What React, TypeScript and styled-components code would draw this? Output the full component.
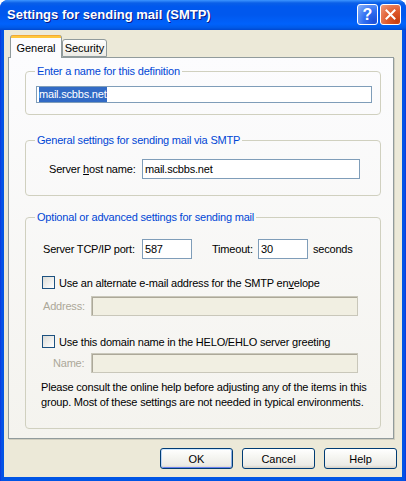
import React from "react";
import styled, { createGlobalStyle } from "styled-components";

const Global = createGlobalStyle`
  html, body { margin: 0; padding: 0; background: #ffffff; }
  body { font-family: "Liberation Sans", Arial, sans-serif; font-size: 11px; color: #000; }
  * { box-sizing: border-box; }
`;

const Window = styled.div`
  width: 406px;
  height: 481px;
  display: flex;
  flex-direction: column;
  background: linear-gradient(to right, #0831d9 0, #0a4ce6 1px, #0055e5 3px, #0055e5 403px, #0a4ce6 405px, #0831d9 406px);
  border-radius: 8px 8px 0 0;
  overflow: hidden;
`;

const TitleBar = styled.div`
  height: 30px;
  flex: none;
  display: flex;
  align-items: center;
  justify-content: space-between;
  padding: 0 5px 1px 7px;
  background: linear-gradient(to bottom, #3d95ff 0%, #0a5fe8 10%, #0058ee 22%, #0058ee 50%, #0062fc 80%, #005ae8 92%, #0048d0 100%);
`;

const Title = styled.div`
  color: #fff;
  font: bold 13px "Liberation Sans", Arial, sans-serif;
  text-shadow: 1px 1px 0 #0a1883;
`;

const TitleButtons = styled.div`
  display: flex;
  gap: 2px;
`;

const TitleBtn = styled.div<{ $kind: "help" | "close" }>`
  width: 21px;
  height: 21px;
  border: 1px solid #fff;
  border-radius: 3px;
  display: flex;
  align-items: center;
  justify-content: center;
  color: #fff;
  font: bold 16px "Liberation Sans", Arial, sans-serif;
  background: ${(p) =>
    p.$kind === "close"
      ? "radial-gradient(circle at 85% 85%, #c73e10 0%, #e05a2c 45%, #ef9c80 100%)"
      : "radial-gradient(circle at 85% 85%, #1c4fd8 0%, #2f6ef2 45%, #8ab4fa 100%)"};
`;

const Client = styled.div`
  flex: 1;
  margin: 0 4px 4px 4px;
  background: #ece9d8;
  display: flex;
  flex-direction: column;
  padding: 5px 6px 8px 4px;
`;

const TabRow = styled.div`
  height: 22px;
  display: flex;
  align-items: flex-end;
  padding-left: 2px;
  position: relative;
  z-index: 1;
`;

const Tab = styled.div<{ $active?: boolean; $w: number }>`
  width: ${(p) => p.$w}px;
  height: ${(p) => (p.$active ? 23 : 18)}px;
  margin-bottom: ${(p) => (p.$active ? -1 : 0)}px;
  border: 1px solid #919b9c;
  border-bottom: ${(p) => (p.$active ? "none" : "1px solid #919b9c")};
  border-top: ${(p) => (p.$active ? "none" : "1px solid #919b9c")};
  border-radius: 3px 3px 0 0;
  display: flex;
  align-items: center;
  justify-content: center;
  padding-top: ${(p) => (p.$active ? 2 : 0)}px;
  background: ${(p) =>
    p.$active
      ? "linear-gradient(to bottom, #e68b2c 0, #ffc73c 1px, #ffc73c 3px, #fcfcfe 3px, #fcfcfe 100%)"
      : "linear-gradient(to bottom, #ffffff 0%, #f4f3ee 60%, #ecebe6 100%)"};
  font-size: 11px;
`;

const TabPanel = styled.div`
  height: 382px;
  margin-right: 2px;
  border: 1px solid #919b9c;
  background: linear-gradient(to bottom, #fcfcfe 0%, #f4f3ee 100%);
  padding: 7px 12px 0 16px;
  display: flex;
  flex-direction: column;
  box-shadow: 1px 1px 0 #d0cebf;
`;

const Group = styled.fieldset<{ $mt?: number }>`
  margin: ${(p) => p.$mt ?? 0}px 0 0 0;
  min-width: 0;
  padding: 0;
  border: 1px solid #d0d0bf;
  border-radius: 4px;
`;

const Legend = styled.legend`
  color: #0046d5;
  padding: 0 2px;
  margin-left: 9px;
  line-height: 13px;
  font-size: 11px;
  letter-spacing: -0.2px;
`;

const GroupBody = styled.div<{ $pad: string }>`
  padding: ${(p) => p.$pad};
  display: flex;
  flex-direction: column;
`;

const Row = styled.div<{ $mt?: number; $pl?: number }>`
  display: flex;
  align-items: center;
  margin-top: ${(p) => p.$mt ?? 0}px;
  padding-left: ${(p) => p.$pl ?? 0}px;
  letter-spacing: -0.2px;
`;

const Label = styled.span<{ $w?: number; $ml?: number; $disabled?: boolean }>`
  width: ${(p) => (p.$w ? `${p.$w}px` : "auto")};
  margin-left: ${(p) => p.$ml ?? 0}px;
  color: ${(p) => (p.$disabled ? "#aca899" : "#000")};
  flex: none;
  white-space: nowrap;
`;

const Field = styled.div<{ $w?: number; $disabled?: boolean }>`
  width: ${(p) => (p.$w ? `${p.$w}px` : "auto")};
  flex: ${(p) => (p.$w ? "none" : "1")};
  height: 20px;
  border: 1px solid ${(p) => (p.$disabled ? "#c9c7ba" : "#7f9db9")};
  background: ${(p) => (p.$disabled ? "#f1efe2" : "#ffffff")};
  box-shadow: ${(p) => (p.$disabled ? "inset 1px 1px 0 #aca899" : "none")};
  display: flex;
  align-items: center;
  padding-left: 2px;
  letter-spacing: -0.2px;
  white-space: nowrap;
`;

const Selected = styled.span`
  background: #316ac5;
  color: #fff;
  line-height: 15px;
`;

const CheckBox = styled.span`
  width: 13px;
  height: 13px;
  flex: none;
  border: 1px solid #1c5180;
  background: linear-gradient(135deg, #dcdcd7 0%, #ffffff 100%);
  margin-right: 4px;
`;

const Note = styled.p`
  margin: 0;
  padding-left: 15px;
  line-height: 15px;
  letter-spacing: -0.2px;
`;

const ButtonRow = styled.div`
  display: flex;
  justify-content: flex-end;
  gap: 9px;
  margin-top: 9px;
  margin-right: -1px;
`;

const Button = styled.div<{ $default?: boolean }>`
  width: 73px;
  height: 21px;
  border: 1px solid #003c74;
  border-radius: 3px;
  display: flex;
  align-items: center;
  justify-content: center;
  background: linear-gradient(to bottom, #ffffff 0%, #f6f6f2 40%, #ecebe6 85%, #d6d0c5 100%);
  box-shadow: ${(p) =>
    p.$default
      ? "inset 0 1px 0 #cee7ff, inset 1px 0 0 #bcd4f6, inset -1px 0 0 #89ade4, inset 0 -1px 0 #6982ee"
      : "none"};
  font-size: 11px;
`;

export default function App() {
  return (
    <>
      <Global />
      <Window>
        <TitleBar>
          <Title>Settings for sending mail (SMTP)</Title>
          <TitleButtons>
            <TitleBtn $kind="help">?</TitleBtn>
            <TitleBtn $kind="close">
              <svg width="11" height="11" viewBox="0 0 11 11">
                <path d="M1.5 1.5 L9.5 9.5 M9.5 1.5 L1.5 9.5" stroke="#fff" strokeWidth="2" strokeLinecap="square" />
              </svg>
            </TitleBtn>
          </TitleButtons>
        </TitleBar>
        <Client>
          <TabRow>
            <Tab $active $w={52}>General</Tab>
            <Tab $w={45}>Security</Tab>
          </TabRow>
          <TabPanel>
            <Group>
              <Legend>Enter a name for this definition</Legend>
              <GroupBody $pad="8px 8px 11px 10px">
                <Field>
                  <Selected>mail.scbbs.net</Selected>
                </Field>
              </GroupBody>
            </Group>

            <Group $mt={19}>
              <Legend>General settings for sending mail via SMTP</Legend>
              <GroupBody $pad="12px 0 16px 0">
                <Row $pl={23}>
                  <Label $w={93}>
                    Server <u>h</u>ost name:
                  </Label>
                  <Field $w={218}>mail.scbbs.net</Field>
                </Row>
              </GroupBody>
            </Group>

            <Group $mt={15}>
              <Legend>Optional or advanced settings for sending mail</Legend>
              <GroupBody $pad="15px 0 18px 0">
                <Row $pl={17}>
                  <Label $w={99}>Server TCP/IP port:</Label>
                  <Field $w={50}>587</Field>
                  <Label $w={46} $ml={20}>
                    Timeout:
                  </Label>
                  <Field $w={50}>30</Field>
                  <Label $ml={5}>seconds</Label>
                </Row>
                <Row $mt={17} $pl={16}>
                  <CheckBox />
                  <Label>
                    Use an alternate e-mail address for the SMTP en<u>v</u>elope
                  </Label>
                </Row>
                <Row $mt={7} $pl={17}>
                  <Label $w={48} $disabled>
                    Address:
                  </Label>
                  <Field $w={267} $disabled />
                </Row>
                <Row $mt={19} $pl={16}>
                  <CheckBox />
                  <Label>Use this domain name in the HELO/EHLO server greeting</Label>
                </Row>
                <Row $mt={5} $pl={27}>
                  <Label $w={38} $disabled>
                    Name:
                  </Label>
                  <Field $w={267} $disabled />
                </Row>
                <Row $mt={7}>
                  <Note>
                    Please consult the online help before adjusting any of the items in this
                    <br />
                    group. Most of these settings are not needed in typical environments.
                  </Note>
                </Row>
              </GroupBody>
            </Group>
          </TabPanel>
          <ButtonRow>
            <Button $default>OK</Button>
            <Button>Cancel</Button>
            <Button>Help</Button>
          </ButtonRow>
        </Client>
      </Window>
    </>
  );
}
